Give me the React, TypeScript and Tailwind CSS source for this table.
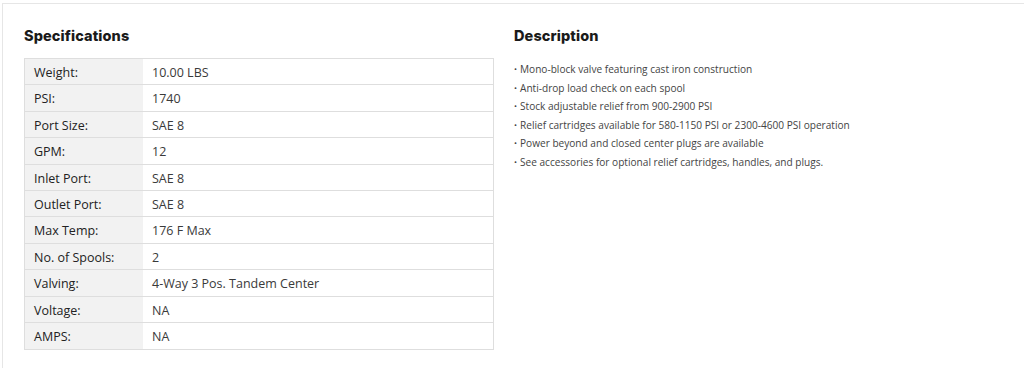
const specs: [string, string][] = [
  ["Weight:", "10.00 LBS"],
  ["PSI:", "1740"],
  ["Port Size:", "SAE 8"],
  ["GPM:", "12"],
  ["Inlet Port:", "SAE 8"],
  ["Outlet Port:", "SAE 8"],
  ["Max Temp:", "176 F Max"],
  ["No. of Spools:", "2"],
  ["Valving:", "4-Way 3 Pos. Tandem Center"],
  ["Voltage:", "NA"],
  ["AMPS:", "NA"],
];

const features = [
  "Mono-block valve featuring cast iron construction",
  "Anti-drop load check on each spool",
  "Stock adjustable relief from 900-2900 PSI",
  "Relief cartridges available for 580-1150 PSI or 2300-4600 PSI operation",
  "Power beyond and closed center plugs are available",
  "See accessories for optional relief cartridges, handles, and plugs.",
];

export default function App() {
  return (
    <div className="w-[1024px] h-[368px] overflow-hidden bg-white pt-[3px] pl-[2px]">
      <div className="w-[1040px] h-[400px] border border-[#e6e6e6] bg-white pl-[21px] pt-[22px] flex gap-[20px] font-['Open_Sans',sans-serif]">
        {/* specs */}
        <div className="w-[470px]">
          <h2 className="font-['Inter',sans-serif] font-extrabold text-[14.5px] leading-[20px] text-[#1a1a1a] tracking-[0.1px]">
            Specifications
          </h2>
          <div className="mt-[12px] border border-[#dedede]">
            {specs.map(([label, value], i) => (
              <div
                key={label}
                className={
                  "flex h-[26.4px] " +
                  (i < specs.length - 1 ? "border-b border-[#dedede]" : "")
                }
              >
                <div className="w-[118px] bg-[#f2f2f2] pl-[9px] text-[12.5px] leading-[27px] text-[#222]">
                  {label}
                </div>
                <div className="flex-1 pl-[9px] text-[12.5px] leading-[27px] text-[#3a3a3a]">
                  {value}
                </div>
              </div>
            ))}
          </div>
        </div>
        {/* description */}
        <div className="flex-1">
          <h2 className="font-['Inter',sans-serif] font-extrabold text-[14.5px] leading-[20px] text-[#1a1a1a] tracking-[0.1px]">
            Description
          </h2>
          <ul className="mt-[14px]">
            {features.map((f) => (
              <li key={f} className="flex text-[10.1px] leading-[18.6px] text-[#444]">
                <span className="w-[6px] text-[8px]">•</span>
                <span>{f}</span>
              </li>
            ))}
          </ul>
        </div>
      </div>
    </div>
  );
}
